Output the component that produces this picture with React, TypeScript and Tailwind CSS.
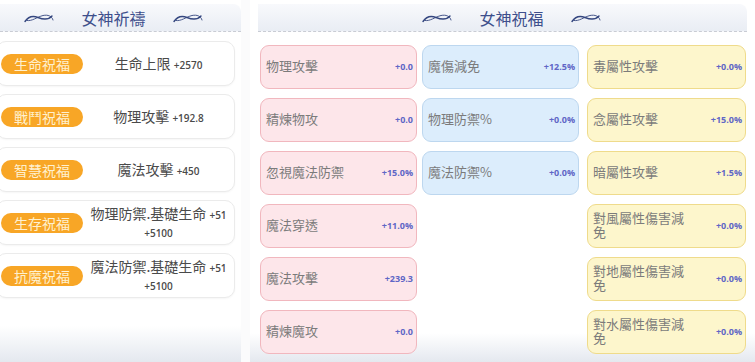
import React from "react";

type Stat = { label: string; value: string };

const prayers: { tag: string; text: string; value: string; extra?: string }[] = [
  { tag: "生命祝福", text: "生命上限", value: "+2570" },
  { tag: "戰鬥祝福", text: "物理攻擊", value: "+192.8" },
  { tag: "智慧祝福", text: "魔法攻擊", value: "+450" },
  { tag: "生存祝福", text: "物理防禦.基礎生命", value: "+51", extra: "+5100" },
  { tag: "抗魔祝福", text: "魔法防禦.基礎生命", value: "+51", extra: "+5100" },
];

const redStats: Stat[] = [
  { label: "物理攻擊", value: "+0.0" },
  { label: "精煉物攻", value: "+0.0" },
  { label: "忽視魔法防禦", value: "+15.0%" },
  { label: "魔法穿透", value: "+11.0%" },
  { label: "魔法攻擊", value: "+239.3" },
  { label: "精煉魔攻", value: "+0.0" },
];

const blueStats: Stat[] = [
  { label: "魔傷減免", value: "+12.5%" },
  { label: "物理防禦%", value: "+0.0%" },
  { label: "魔法防禦%", value: "+0.0%" },
];

const yellowStats: Stat[] = [
  { label: "毒屬性攻擊", value: "+0.0%" },
  { label: "念屬性攻擊", value: "+15.0%" },
  { label: "暗屬性攻擊", value: "+1.5%" },
  { label: "對風屬性傷害減免", value: "+0.0%" },
  { label: "對地屬性傷害減免", value: "+0.0%" },
  { label: "對水屬性傷害減免", value: "+0.0%" },
];

const cjk = "font-['Noto_Sans_CJK_TC','Noto_Sans',sans-serif]";
const num = "font-['Open_Sans','Noto_Sans',sans-serif]";

// little ribbon ornament beside the titles
function Swirl() {
  return (
    <svg width="32" height="12" viewBox="0 0 32 12" fill="none" className="shrink-0">
      <path
        d="M2 9.5 C 5 5, 10 3.5, 15 5.5 C 20 7.5, 25 8.5, 29 4"
        stroke="#34467f"
        strokeWidth="1.4"
        strokeLinecap="round"
      />
      <path
        d="M4 8.5 C 9 9.5, 14 5, 20 3.5 C 25 2.5, 29 4, 30 8"
        stroke="#34467f"
        strokeWidth="0.9"
        strokeLinecap="round"
      />
    </svg>
  );
}

function Header({ title, className }: { title: string; className: string }) {
  return (
    <div className={`mt-[4px] h-[28px] rounded-tr-lg bg-[linear-gradient(to_bottom,#f8f9fc,#e9edf4)] border-b border-dashed border-[#c9ccd4] flex items-center ${className}`}>
      <Swirl />
      <span className={`text-[16px] leading-none text-[#3e4f8c] ${cjk}`}>{title}</span>
      <Swirl />
    </div>
  );
}

function StatCard({ stat, tone }: { stat: Stat; tone: string }) {
  return (
    <div className={`h-[44px] rounded-[9px] border flex items-center justify-between pl-[5px] pr-[3px] ${tone}`}>
      <span className={`w-[96px] text-[13px] leading-[14px] text-[#7b7b7b] mb-[3px] ${cjk}`}>{stat.label}</span>
      <span className={`text-[9px] font-bold text-[#6066c6] ${num}`}>{stat.value}</span>
    </div>
  );
}

export default function App() {
  return (
    <div className="w-[755px] h-[362px] overflow-hidden bg-[#fbfbfc] flex">
      {/* left: prayers */}
      <div className="w-[241px] shrink-0 flex flex-col bg-[linear-gradient(to_bottom,#ffffff_90%,#e4e8ef)]">
        <Header title="女神祈禱" className="justify-center gap-[26px] pr-[14px]" />
        <div className="mt-[9px] flex flex-col gap-[8px] -ml-[4px] w-[239px]">
          {prayers.map((p) => (
            <div
              key={p.tag}
              className="h-[45px] rounded-[10px] border border-[#ebebeb] bg-white shadow-[0_1px_2px_rgba(0,0,0,0.04)] flex items-center"
            >
              <div className={`ml-[4px] w-[82px] h-[20px] shrink-0 rounded-full bg-[#f8a626] flex items-center justify-center text-[14px] leading-none text-[#fff1cf] ${cjk}`}>
                {p.tag}
              </div>
              <div className={`flex-1 px-[4px] text-center text-[14px] leading-[16px] text-[#4a4a4a] ${cjk}`}>
                {p.text}{" "}
                <span className={`text-[10px] font-semibold text-[#4a4a4a] ${num}`}>{p.value}</span>
                {p.extra && (
                  <>
                    {" "}
                    <span className={`text-[10px] font-semibold text-[#4a4a4a] ${num}`}>{p.extra}</span>
                  </>
                )}
              </div>
            </div>
          ))}
        </div>
      </div>

      {/* right: blessings */}
      <div className="ml-[9px] w-[505px] shrink-0 flex flex-col bg-[linear-gradient(to_bottom,#ffffff_92%,#e4e8ef)]">
        <Header title="女神祝福" className="justify-center gap-[26px] pl-[18px] mx-[8px]" />
        <div className="mt-[13px] pl-[10px] flex">
          <div className="w-[157px] flex flex-col gap-[9px]">
            {redStats.map((s) => (
              <StatCard key={s.label} stat={s} tone="bg-[#fde6ea] border-[#f1b7be]" />
            ))}
          </div>
          <div className="ml-[5px] w-[157px] flex flex-col gap-[9px]">
            {blueStats.map((s) => (
              <StatCard key={s.label} stat={s} tone="bg-[#dcedfc] border-[#bdd7ef]" />
            ))}
          </div>
          <div className="ml-[8px] w-[159px] flex flex-col gap-[9px]">
            {yellowStats.map((s) => (
              <StatCard key={s.label} stat={s} tone="bg-[#fdf6cc] border-[#efdb8b]" />
            ))}
          </div>
        </div>
      </div>
    </div>
  );
}
